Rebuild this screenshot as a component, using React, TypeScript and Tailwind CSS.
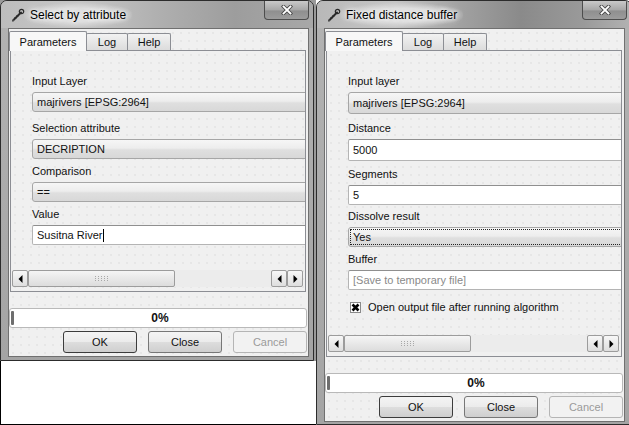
import React from "react";

const dots =
  "bg-[#f0f0f0] bg-[radial-gradient(circle,#dcdcdc_0.5px,transparent_0.9px)] bg-size-[8px_8px]";

function AppIcon() {
  return (
    <svg width="14" height="14" viewBox="0 0 14 14">
      <path d="M2 12.5 L10 4.5" stroke="#2a2a2a" strokeWidth="2" strokeLinecap="round" />
      <path d="M3.5 9 L5 10.5 M5.5 7 L7 8.5" stroke="#2a2a2a" strokeWidth="1" />
      <circle cx="10.5" cy="3.5" r="2.2" fill="none" stroke="#2a2a2a" strokeWidth="1.2" />
      <path d="M1 13 L3 12" stroke="#555" strokeWidth="1" />
    </svg>
  );
}

function CloseBtn() {
  return (
    <div className="flex h-[19px] w-[45px] items-center justify-center rounded-b-[4px] border border-t-0 border-[#4d4d4d] bg-[linear-gradient(180deg,#c9c9c9_0%,#a7a7a7_50%,#8f8f8f_55%,#9c9c9c_100%)]">
      <svg width="12" height="10" viewBox="0 0 12 10">
        <path d="M2.5 1.5 L9.5 8.5 M9.5 1.5 L2.5 8.5" stroke="#4a4a4a" strokeWidth="3.6" strokeLinecap="square" />
        <path d="M2.5 1.5 L9.5 8.5 M9.5 1.5 L2.5 8.5" stroke="#ffffff" strokeWidth="1.8" strokeLinecap="square" />
      </svg>
    </div>
  );
}

function Tri({ dir }: { dir: "l" | "r" }) {
  return (
    <svg width="5" height="8" viewBox="0 0 5 8">
      <path d={dir === "l" ? "M4.5 0 L0.5 4 L4.5 8 Z" : "M0.5 0 L4.5 4 L0.5 8 Z"} fill="#000" />
    </svg>
  );
}

function ArrowBtn({ dir }: { dir: "l" | "r" }) {
  return (
    <div className="flex h-full w-[16px] shrink-0 items-center justify-center rounded-[2px] border border-[#9c9c9c] bg-[linear-gradient(180deg,#f7f7f7,#dedede)]">
      <Tri dir={dir} />
    </div>
  );
}

function Grip() {
  return (
    <svg width="16" height="7" viewBox="0 0 16 7">
      {[0, 1, 2].map((r) =>
        [0, 1, 2, 3, 4].map((c) => (
          <rect key={`${r}-${c}`} x={c * 3 + 1} y={r * 2 + 1} width="1" height="1" fill="#a8a8a8" />
        ))
      )}
    </svg>
  );
}

function HScroll({ thumb }: { thumb: string }) {
  return (
    <div className="mb-[4px] ml-[1px] mr-[2px] flex h-[17px] shrink-0 bg-[#e8e8e8]">
      <ArrowBtn dir="l" />
      <div className={`flex h-full shrink-0 items-center justify-center rounded-[2px] border border-[#9c9c9c] bg-[linear-gradient(180deg,#f5f5f5,#dcdcdc)] ${thumb}`}>
        <Grip />
      </div>
      <div className="flex-1 bg-[#ececec]" />
      <ArrowBtn dir="l" />
      <ArrowBtn dir="r" />
    </div>
  );
}

function Label({ text, className = "" }: { text: string; className?: string }) {
  return <div className={`mb-[3px] h-[16px] leading-[16px] ${className}`}>{text}</div>;
}

function Combo({ value, h, focus }: { value: string; h: string; focus?: boolean }) {
  return (
    <div
      className={`flex w-[330px] shrink-0 items-center rounded-[3px] border border-[#a6a6a6] bg-[linear-gradient(180deg,#f6f6f6_0%,#ededed_45%,#dfdfdf_55%,#d8d8d8_100%)] ${h} ${focus ? "p-[1px]" : "pl-[4px]"}`}
    >
      {focus ? (
        <div className="flex h-full w-full items-center border border-dotted border-[#222] pl-[2px]">{value}</div>
      ) : (
        value
      )}
    </div>
  );
}

function TextBox({ value, h, caret, placeholder }: { value: string; h: string; caret?: boolean; placeholder?: boolean }) {
  return (
    <div
      className={`flex w-[330px] shrink-0 items-center rounded-[2px] border border-[#b4b4b4] border-t-[#8f8f8f] bg-white pl-[4px] ${h} ${placeholder ? "text-[#8a8a8a]" : ""}`}
    >
      {value}
      {caret && <span className="ml-[1px] inline-block h-[13px] w-[1px] bg-black" />}
    </div>
  );
}

function Button({ text, focus, disabled }: { text: string; focus?: boolean; disabled?: boolean }) {
  return (
    <div
      className={`flex h-[22px] w-[74px] items-center justify-center rounded-[3px] border ${
        disabled
          ? "border-[#b5b5b5] bg-[#f2f2f2] text-[#9a9a9a]"
          : focus
          ? "border-[#3c3c3c] bg-[linear-gradient(180deg,#f4f4f4_0%,#ebebeb_50%,#dddddd_51%,#cfcfcf_100%)]"
          : "border-[#777] bg-[linear-gradient(180deg,#f4f4f4_0%,#ebebeb_50%,#dddddd_51%,#cfcfcf_100%)]"
      }`}
    >
      {text}
    </div>
  );
}

function Window({
  title,
  className,
  titleBg,
  paneH,
  thumb,
  bottom,
  children,
}: {
  title: string;
  className: string;
  titleBg: string;
  paneH: string;
  thumb: string;
  bottom: string;
  children: React.ReactNode;
}) {
  return (
    <div className={`flex shrink-0 flex-col overflow-hidden rounded-t-[7px] border border-[#2c2c2c] bg-[linear-gradient(180deg,#b3b3b3,#a4a4a4)] ${className}`}>
      <div className={`flex h-[27px] shrink-0 items-center ${titleBg}`}>
        <div className="ml-[10px] flex h-[14px] w-[14px] items-center justify-center">
          <AppIcon />
        </div>
        <span className="-ml-[1px] rounded-full bg-[radial-gradient(ellipse,#dcdcdc_40%,transparent_75%)] px-[6px] py-[3px] text-[12px] text-black [text-shadow:0_0_6px_#f2f2f2,0_0_3px_#f2f2f2,0_0_10px_#eeeeee]">
          {title}
        </span>
        <div className="ml-auto mr-[4px] self-start">
          <CloseBtn />
        </div>
      </div>
      <div className={`ml-[7px] flex w-[301px] flex-1 flex-col border border-[#707070] ${dots} ${bottom}`}>
        <div className="flex h-[21px] shrink-0 items-end">
          <div className="relative z-10 -mb-[1px] flex h-[20px] w-[78px] items-start justify-center rounded-t-[2px] border border-b-0 border-[#8c8e94] bg-[#f7f7f7] pt-[2px]">
            Parameters
          </div>
          <div className="-ml-[1px] flex h-[17px] w-[42px] items-center justify-center rounded-t-[2px] border border-b-0 border-[#8c8e94] bg-[linear-gradient(180deg,#f2f2f2,#dcdcdc)]">
            Log
          </div>
          <div className="-ml-[1px] flex h-[17px] w-[44px] items-center justify-center rounded-t-[2px] border border-b-0 border-[#8c8e94] bg-[linear-gradient(180deg,#f2f2f2,#dcdcdc)]">
            Help
          </div>
        </div>
        <div className={`ml-[1px] flex w-[296px] shrink-0 flex-col border border-[#8c8e94] ${dots} ${paneH}`}>
          <div className="flex flex-1 flex-col overflow-hidden pl-[21px] pt-[22px]">{children}</div>
          <HScroll thumb={thumb} />
        </div>
        <div className="mr-[1px] mt-[16px] flex h-[20px] items-center rounded-[3px] border border-[#b9b9b9] bg-white pl-[1px]">
          <div className="h-[14px] w-[3px] rounded-[1px] bg-[#6e6e6e]" />
          <div className="flex-1 text-center text-[12px] font-bold">0%</div>
        </div>
        <div className="mr-[1px] mt-[3px] flex justify-end gap-[11px]">
          <Button text="OK" focus />
          <Button text="Close" />
          <Button text="Cancel" disabled />
        </div>
      </div>
    </div>
  );
}

export default function App() {
  return (
    <div className="flex h-[425px] w-[629px] overflow-hidden bg-white font-['Liberation_Sans',Arial,sans-serif] text-[11px] text-[#111]">
      <div className="flex w-[316px] shrink-0 flex-col bg-[#9a9a9a]">
        <Window
          title="Select by attribute"
          className="h-[361px] w-[314px]"
          titleBg="bg-[linear-gradient(90deg,#bdbdbd_0%,#c7c7c7_25%,#b0b0b0_50%,#9d9d9d_75%,#a8a8a8_100%)]"
          paneH="h-[242px]"
          thumb="w-[147px]"
          bottom="mb-[3px]"
        >
          <Label text="Input Layer" />
          <Combo value="majrivers [EPSG:2964]" h="h-[20px]" />
          <Label text="Selection attribute" className="mt-[8px]" />
          <Combo value="DECRIPTION" h="h-[20px]" />
          <Label text="Comparison" className="mt-[4px]" />
          <Combo value="==" h="h-[20px]" />
          <Label text="Value" className="mt-[4px]" />
          <TextBox value="Susitna River" h="h-[20px]" caret />
        </Window>
        <div className="flex-1 border-b border-l border-black bg-white" />
      </div>
      <Window
        title="Fixed distance buffer"
        className="h-[425px] w-[316px]"
        titleBg="bg-[linear-gradient(90deg,#b8b8b8_0%,#c6c6c6_25%,#a2a2a2_45%,#8a8a8a_65%,#9a9a9a_85%,#b2b2b2_100%)]"
        paneH="h-[307px]"
        thumb="w-[127px]"
        bottom="mb-[2px]"
      >
        <Label text="Input layer" />
        <Combo value="majrivers [EPSG:2964]" h="h-[22px]" />
        <Label text="Distance" className="mt-[6px]" />
        <TextBox value="5000" h="h-[22px]" />
        <Label text="Segments" className="mt-[5px]" />
        <TextBox value="5" h="h-[20px]" />
        <Label text="Dissolve result" className="mt-[3px]" />
        <Combo value="Yes" h="h-[20px]" focus />
        <Label text="Buffer" className="mt-[4px]" />
        <TextBox value="[Save to temporary file]" h="h-[20px]" placeholder />
        <div className="ml-[2px] mt-[9px] flex h-[16px] items-center gap-[7px]">
          <svg width="11" height="11" viewBox="0 0 11 11">
            <rect x="0.5" y="0.5" width="10" height="10" fill="#fff" stroke="#8a8a8a" />
            <path d="M2.5 2.5 L8.5 8.5 M8.5 2.5 L2.5 8.5" stroke="#000" strokeWidth="2.6" />
          </svg>
          <span>Open output file after running algorithm</span>
        </div>
      </Window>
    </div>
  );
}
